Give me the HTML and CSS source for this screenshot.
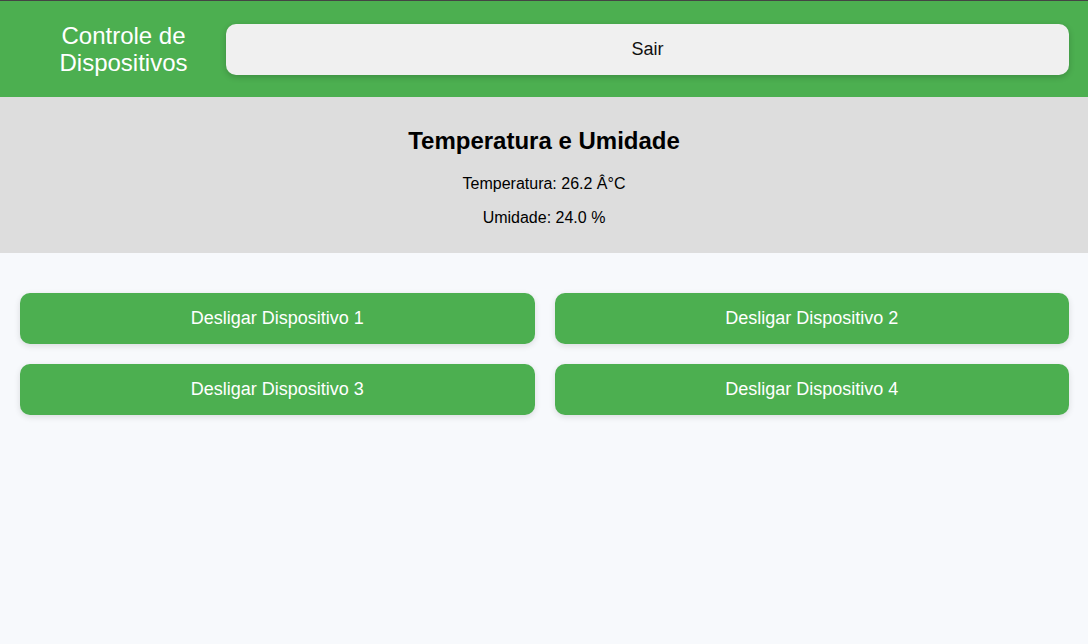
FILE: index.html
```html
<!DOCTYPE html>
<html lang="pt">
<head>
<meta charset="utf-8">
<title>Controle de Dispositivos</title>
<link rel="stylesheet" href="styles.css">
</head>
<body>
<header class="topbar">
  <h1 class="title">Controle de Dispositivos</h1>
  <button class="logout">Sair</button>
</header>
<section class="sensors">
  <h2 class="sensors-title">Temperatura e Umidade</h2>
  <p class="reading">Temperatura: 26.2 Â°C</p>
  <p class="reading">Umidade: 24.0 %</p>
</section>
<main class="devices">
  <button class="device">Desligar Dispositivo 1</button>
  <button class="device">Desligar Dispositivo 2</button>
  <button class="device">Desligar Dispositivo 3</button>
  <button class="device">Desligar Dispositivo 4</button>
</main>
</body>
</html>
```
FILE: styles.css
```css
* { box-sizing: border-box; }
html, body {
  margin: 0;
  padding: 0;
  background: #f7f9fc;
  font-family: "Liberation Sans", Arial, sans-serif;
  color: #000;
}
.topbar {
  display: flex;
  align-items: center;
  gap: 19px;
  height: 97px;
  padding: 0 19px 0 40px;
  background: #4caf50;
  border-top: 1px solid #444;
}
.title {
  width: 167px;
  flex: 0 0 167px;
  margin: 0;
  font-size: 24px;
  font-weight: normal;
  line-height: 27px;
  text-align: center;
  color: #fff;
}
.logout {
  flex: 1;
  height: 51px;
  margin-top: 1px;
  border: none;
  border-radius: 10px;
  background: #f0f0f0;
  color: #111;
  font-family: inherit;
  font-size: 18px;
  box-shadow: 0 2px 6px rgba(0,0,0,0.2);
}
.sensors {
  background: #dddddd;
  padding: 30px 20px 26px;
  text-align: center;
  display: flex;
  flex-direction: column;
  align-items: center;
}
.sensors-title {
  margin: 0 0 20px;
  font-size: 24px;
  line-height: 28px;
  font-weight: bold;
  color: #000;
}
.reading {
  margin: 0;
  font-size: 16px;
  line-height: 18px;
}
.reading + .reading { margin-top: 16px; }
.devices {
  display: grid;
  grid-template-columns: 1fr 1fr;
  gap: 20px;
  padding: 40px 19px 20px 20px;
}
.device {
  height: 51px;
  border: none;
  border-radius: 10px;
  background: #4caf50;
  color: #fff;
  font-family: inherit;
  font-size: 18px;
  box-shadow: 0 2px 6px rgba(0,0,0,0.12);
}
```
